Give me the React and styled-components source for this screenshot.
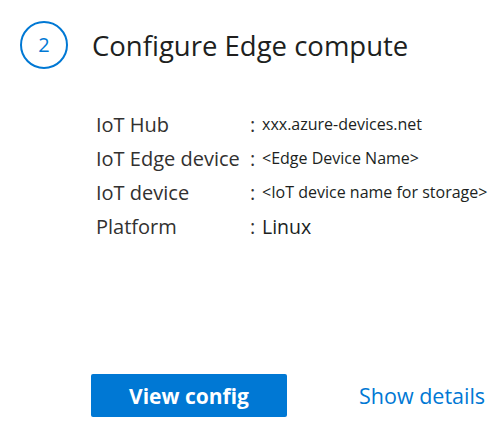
import React from "react";
import styled, { createGlobalStyle } from "styled-components";

const GlobalStyle = createGlobalStyle`
  html, body {
    margin: 0;
    padding: 0;
    background: #ffffff;
  }
  body {
    font-family: "Open Sans", "Noto Sans", sans-serif;
    color: #323130;
  }
`;

const Card = styled.div`
  width: 504px;
  height: 435px;
  box-sizing: border-box;
  padding: 21px 0 0 20px;
  display: flex;
  flex-direction: column;
`;

const Header = styled.div`
  display: flex;
  align-items: center;
  gap: 24px;
`;

const StepCircle = styled.div`
  width: 44px;
  height: 44px;
  flex-shrink: 0;
  border: 2px solid #0078d4;
  border-radius: 50%;
  display: flex;
  align-items: center;
  justify-content: center;
  color: #0078d4;
  font-size: 20px;
  line-height: 1;
`;

const Title = styled.h2`
  margin: 0;
  font-size: 27.5px;
  font-weight: 400;
  color: #201f1e;
  white-space: nowrap;
`;

const InfoGrid = styled.div`
  display: grid;
  grid-template-columns: 154px 12px auto;
  grid-auto-rows: 34px;
  align-items: center;
  margin: 38px 0 0 76px;
`;

const Label = styled.span`
  font-size: 20px;
  color: #323130;
  white-space: nowrap;
`;

const Colon = styled.span`
  font-size: 20px;
  color: #323130;
`;

const Value = styled.span`
  font-size: ${(p) => p.$size}px;
  color: #201f1e;
  white-space: nowrap;
`;

const Footer = styled.div`
  margin-top: auto;
  margin-bottom: 18px;
  margin-left: 71px;
  display: flex;
  align-items: center;
  gap: 72px;
`;

const PrimaryButton = styled.button`
  width: 196px;
  height: 43px;
  border: none;
  border-radius: 2px;
  background: #0078d4;
  color: #ffffff;
  font-family: "Open Sans", "Noto Sans", sans-serif;
  font-size: 21px;
  font-weight: 700;
  cursor: pointer;
`;

const LinkButton = styled.a`
  font-size: 21.5px;
  color: #0078d4;
  text-decoration: none;
  cursor: pointer;
  white-space: nowrap;
`;

const rows = [
  { label: "IoT Hub", value: "xxx.azure-devices.net", size: 16 },
  { label: "IoT Edge device", value: "<Edge Device Name>", size: 16 },
  { label: "IoT device", value: "<IoT device name for storage>", size: 16 },
  { label: "Platform", value: "Linux", size: 19.5 },
];

export default function App() {
  return (
    <>
      <GlobalStyle />
      <Card>
        <Header>
          <StepCircle>2</StepCircle>
          <Title>Configure Edge compute</Title>
        </Header>
        <InfoGrid>
          {rows.map((r) => (
            <React.Fragment key={r.label}>
              <Label>{r.label}</Label>
              <Colon>:</Colon>
              <Value $size={r.size}>{r.value}</Value>
            </React.Fragment>
          ))}
        </InfoGrid>
        <Footer>
          <PrimaryButton>View config</PrimaryButton>
          <LinkButton>Show details</LinkButton>
        </Footer>
      </Card>
    </>
  );
}
